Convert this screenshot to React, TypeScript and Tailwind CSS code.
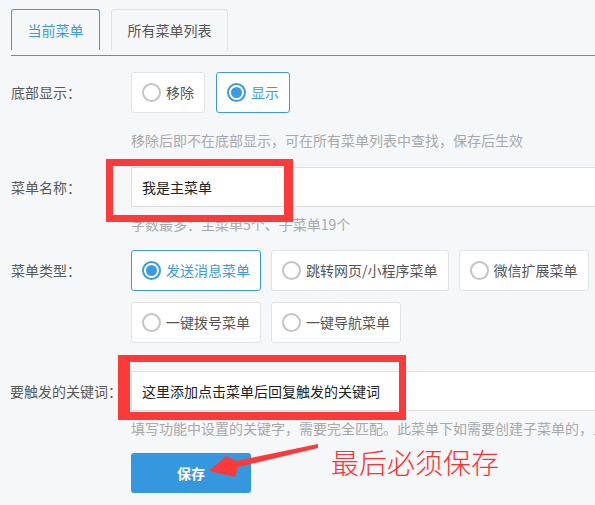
import React from 'react';

const font = { fontFamily: '"Noto Sans CJK SC", "Noto Sans", sans-serif' };

const Radio = ({ checked }: { checked?: boolean }) =>
  checked ? (
    <span className="flex h-[19px] w-[19px] items-center justify-center rounded-full border-2 border-[#3a9be2] bg-white">
      <span className="h-[11px] w-[11px] rounded-full bg-[#3a9be2]" />
    </span>
  ) : (
    <span className="h-[19px] w-[19px] rounded-full border-2 border-[#c4c4c4] bg-white" />
  );

const Option = ({ label, checked }: { label: string; checked?: boolean }) => (
  <div
    className={`flex h-[41px] items-center gap-[5px] rounded-[3px] border bg-white px-[10px] text-[14px] ${
      checked ? 'border-[#3a9be2] text-[#3a9be2]' : 'border-[#e3e3e3] text-[#555]'
    }`}
  >
    <Radio checked={checked} />
    <span className="whitespace-nowrap">{label}</span>
  </div>
);

const Label = ({ children }: { children: React.ReactNode }) => (
  <div className="w-[120px] shrink-0 whitespace-nowrap text-[14px] text-[#5a5a5a]">{children}</div>
);

const Hint = ({ children }: { children: React.ReactNode }) => (
  <div className="ml-[120px] h-[20px] whitespace-nowrap text-[14px] leading-[20px] text-[#a9a9a9]">{children}</div>
);

export default function App() {
  return (
    <div className="relative h-[505px] w-[595px] overflow-hidden bg-[#f6f7f9]" style={font}>
      <div className="pl-[11px] pt-[9px]">
        {/* tabs */}
        <div className="flex gap-[11px]">
          <div className="flex h-[41px] w-[89px] items-center justify-center rounded-t-[3px] border border-b-0 border-[#3a9be2] text-[14px] text-[#3a9be2]">
            当前菜单
          </div>
          <div className="flex h-[41px] w-[117px] items-center justify-center rounded-t-[3px] border border-b-0 border-[#e3e3e3] text-[14px] text-[#555]">
            所有菜单列表
          </div>
        </div>
        <div className="mt-[5px] h-px bg-[#3a9be2]" />

        {/* bottom display */}
        <div className="mt-[16px] flex items-center">
          <Label>底部显示：</Label>
          <div className="flex gap-[11px]">
            <Option label="移除" />
            <Option label="显示" checked />
          </div>
        </div>
        <div className="mt-[17px]">
          <Hint>移除后即不在底部显示，可在所有菜单列表中查找，保存后生效</Hint>
        </div>

        {/* menu name */}
        <div className="mt-[17px] flex items-center">
          <Label>菜单名称：</Label>
          <div className="flex h-[40px] w-[500px] shrink-0 items-center border border-[#dedede] bg-white pl-[10px] text-[14px] text-[#222]">
            我是主菜单
          </div>
        </div>
        <div className="mt-[7px]">
          <Hint>字数最多：主菜单5个、子菜单19个</Hint>
        </div>

        {/* menu type */}
        <div className="mt-[16px] flex items-start">
          <div className="flex h-[41px] items-center">
            <Label>菜单类型：</Label>
          </div>
          <div className="flex w-[470px] shrink-0 flex-wrap gap-x-[10px] gap-y-[11px]">
            <Option label="发送消息菜单" checked />
            <Option label="跳转网页/小程序菜单" />
            <Option label="微信扩展菜单" />
            <Option label="一键拨号菜单" />
            <Option label="一键导航菜单" />
          </div>
        </div>

        {/* keyword */}
        <div className="mt-[28px] flex items-center">
          <Label>
            <span className="-ml-px">要触发的关键词：</span>
          </Label>
          <div className="flex h-[40px] w-[500px] shrink-0 items-center border border-[#dedede] bg-white pl-[10px] text-[14px] text-[#222]">
            这里添加点击菜单后回复触发的关键词
          </div>
        </div>
        <div className="mt-[7px]">
          <Hint>填写功能中设置的关键字，需要完全匹配。此菜单下如需要创建子菜单的，且</Hint>
        </div>

        <div className="ml-[120px] mt-[15px]">
          <button className="flex h-[40px] w-[120px] items-center justify-center rounded-[3px] bg-[#3597dd] text-[14px] font-bold text-white">
            保存
          </button>
        </div>
      </div>

      {/* annotations */}
      <div className="pointer-events-none absolute left-[106px] top-[159px] h-[63px] w-[187px] border-[7px] border-r-[9px] border-[#fd3a3a]" />
      <div className="pointer-events-none absolute left-[118px] top-[355px] h-[65px] w-[288px] border-[7px] border-l-[12px] border-b-[8px] border-[#fd3a3a]" />
      <svg className="pointer-events-none absolute left-0 top-0" width="595" height="505">
        <polygon
          points="318,444 318,448 238,467 235,477 209,471 226,456 236,461"
          fill="#fd3a3a"
        />
      </svg>
      <div className="absolute left-[331px] top-[444px] whitespace-nowrap text-[28px] font-light leading-[36px] text-[#ff3030]">
        最后必须保存
      </div>
    </div>
  );
}
